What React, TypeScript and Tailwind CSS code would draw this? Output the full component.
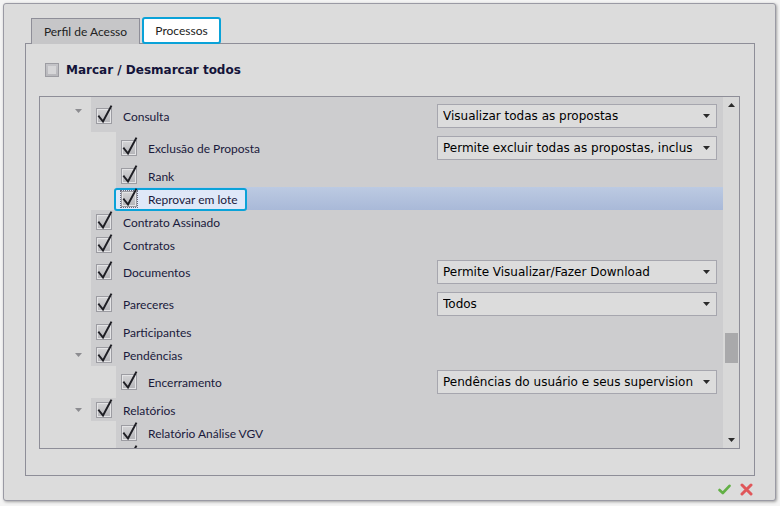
import React from "react";

type Row = {
  label: string;
  level: 1 | 2;
  arrow?: boolean;
  select?: string;
  selected?: boolean;
};

const ROWS: Row[] = [
  { label: "Consulta", level: 1, arrow: true, select: "Visualizar todas as propostas" },
  { label: "Exclusão de Proposta", level: 2, select: "Permite excluir todas as propostas, inclus" },
  { label: "Rank", level: 2 },
  { label: "Reprovar em lote", level: 2, selected: true },
  { label: "Contrato Assinado", level: 1 },
  { label: "Contratos", level: 1 },
  { label: "Documentos", level: 1, select: "Permite Visualizar/Fazer Download" },
  { label: "Pareceres", level: 1, select: "Todos" },
  { label: "Participantes", level: 1 },
  { label: "Pendências", level: 1, arrow: true },
  { label: "Encerramento", level: 2, select: "Pendências do usuário e seus supervision" },
  { label: "Relatórios", level: 1, arrow: true },
  { label: "Relatório Análise VGV", level: 2 },
  // next item is scrolled out, only the tip of its check shows
  { label: "", level: 2 },
];

function CheckBox({ checked, focus }: { checked: boolean; focus?: boolean }) {
  return (
    <div className="relative w-[16px] h-[16px] shrink-0">
      <div className="absolute inset-0 border border-[#9c9ca2] bg-gradient-to-b from-[#d4d4d6] to-[#b4b4b8] shadow-[inset_0_0_0_1px_#e4e4e6]" />
      {focus && <div className="absolute inset-[-1px] border border-dotted border-[#6a6a7a]" />}
      {checked && (
        <svg className="absolute left-0 top-[-3px]" width="17" height="19" viewBox="0 0 17 19">
          <path d="M3 11.5 L7 16.5 L15 1.5" fill="none" stroke="#1e1e24" strokeWidth="2" strokeLinecap="square" />
        </svg>
      )}
    </div>
  );
}

function Caret({ up }: { up?: boolean }) {
  return (
    <svg width="7" height="4" viewBox="0 0 7 4">
      <path d={up ? "M0 4 L3.5 0 L7 4 Z" : "M0 0 L7 0 L3.5 4 Z"} fill="currentColor" />
    </svg>
  );
}

function Select({ value }: { value: string }) {
  return (
    <div className="w-[280px] h-[24px] mr-[6px] ml-auto flex items-center border border-[#a6a6ae] bg-[#dcdcdc] pl-[5px] pr-[6px] text-[12px] text-black font-['DejaVu_Sans',sans-serif]">
      <span className="flex-1 whitespace-nowrap overflow-hidden">{value}</span>
      <span className="text-[#2a2a2a] ml-[4px]">
        <Caret />
      </span>
    </div>
  );
}

function TreeRow({ row }: { row: Row }) {
  const tall = !!row.select;
  return (
    <div className={`flex shrink-0 ${tall ? "h-[32px]" : "h-[23px]"}`}>
      <div
        className={`${row.level === 1 ? "w-[51px]" : "w-[76px]"} flex pl-[35px] text-[#8c8c90] ${
          tall ? "items-start pt-[9px]" : "items-center"
        }`}
      >
        {row.arrow && <Caret />}
      </div>
      <div
        className={`flex-1 flex items-center ${
          row.selected ? "bg-gradient-to-b from-[#bccae2] to-[#a9b9d8]" : "bg-[#cdcdcf]"
        }`}
      >
        <div className="relative flex items-center h-[22px]">
          {row.selected && (
            <div className="absolute left-[-2px] top-0 w-[133px] h-[23px] border-[2px] border-[#0aa2d8] rounded-[3px] bg-[#dfe8f8]" />
          )}
          <div className="relative ml-[5px]">
            <CheckBox checked focus={row.selected} />
          </div>
          {row.label && (
            <span className="relative top-[1px] ml-[11px] text-[12px] text-[#1a1a3c] whitespace-nowrap">{row.label}</span>
          )}
        </div>
        {row.select && <Select value={row.select} />}
      </div>
    </div>
  );
}

export default function App() {
  return (
    <div className="w-[780px] h-[506px] bg-[#f4f4f4] pt-[3px] pl-[3px] font-['Lato',sans-serif]">
      <div className="w-[773px] h-[498px] border border-[#9a9aa4] rounded-[3px] bg-[#dcdcdc] shadow-[1px_1px_3px_rgba(0,0,0,0.35)] pt-[13px] pl-[21px] flex flex-col">
        {/* Tabs */}
        <div className="flex items-end ml-[6px] h-[27px] relative z-10 -mb-px">
          <div className="w-[109px] h-[26px] border border-b-0 border-[#8e8e98] bg-[#c6c6c8] flex items-center justify-center text-[12px] text-[#222]">
            Perfil de Acesso
          </div>
          <div className="ml-[2px] w-[79px] h-[27px] border-[2px] border-[#0aa2d8] rounded-[3px] bg-white flex items-center justify-center text-[12px] text-[#222]">
            Processos
          </div>
        </div>

        {/* Panel */}
        <div className="w-[730px] h-[433px] border border-[#8e8e98] bg-[#dcdcdc] pt-[19px] pl-[19px]">
          <div className="flex items-center h-[14px]">
            <div className="w-[14px] h-[14px] border border-[#9c9ca2] bg-gradient-to-b from-[#c4c4c8] to-[#b8b8bc] p-[2px]">
              <div className="w-full h-full bg-[#d6d6d8]" />
            </div>
            <span className="ml-[7px] text-[12px] font-bold text-[#14143a] font-['DejaVu_Sans',sans-serif]">
              Marcar / Desmarcar todos
            </span>
          </div>

          {/* Tree */}
          <div className="ml-[-6px] mt-[19px] w-[701px] h-[353px] border border-[#8e8e98] bg-[#dadada] flex">
            <div className="flex-1 flex flex-col overflow-hidden">
              <div className="h-[3px] shrink-0 flex">
                <div className="w-[51px]" />
                <div className="flex-1 bg-[#cdcdcf]" />
              </div>
              {ROWS.map((r, i) => (
                <TreeRow key={i} row={r} />
              ))}
            </div>
            <div className="w-[16px] flex flex-col items-center text-[#2a2a2a] bg-[#d8d8d8]">
              <div className="mt-[6px]">
                <Caret up />
              </div>
              <div className="mt-[226px] w-[13px] h-[30px] bg-[#a9a9ab]" />
              <div className="flex-1" />
              <div className="mb-[6px]">
                <Caret />
              </div>
            </div>
          </div>
        </div>

        {/* Actions */}
        <div className="flex justify-end items-center gap-[9px] pr-[22px] mt-[7px]">
          <svg width="13" height="11" viewBox="0 0 13 11">
            <path d="M1.5 6 L4.8 9 L11.5 1.8" fill="none" stroke="#62b045" strokeWidth="2.6" strokeLinecap="round" strokeLinejoin="round" />
          </svg>
          <svg width="13" height="13" viewBox="0 0 13 13">
            <path d="M2 2 L11 11 M11 2 L2 11" fill="none" stroke="#e0575a" strokeWidth="3" strokeLinecap="round" />
          </svg>
        </div>
      </div>
    </div>
  );
}
